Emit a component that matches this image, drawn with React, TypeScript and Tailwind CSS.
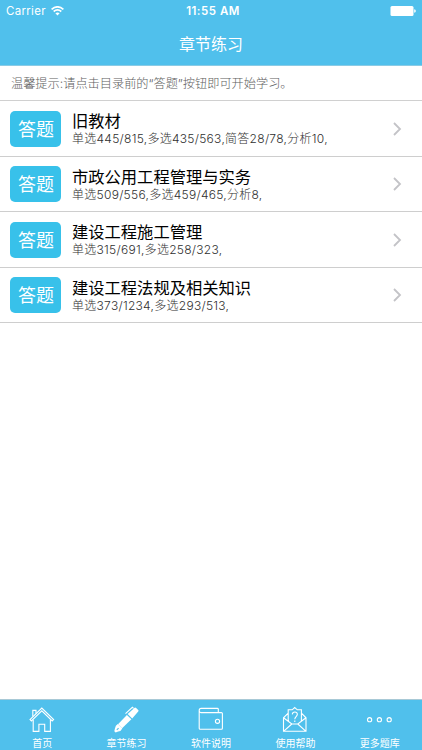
import type { ReactNode } from "react";

const chapters = [
  { title: "旧教材", detail: "单选445/815,多选435/563,简答28/78,分析10," },
  { title: "市政公用工程管理与实务", detail: "单选509/556,多选459/465,分析8," },
  { title: "建设工程施工管理", detail: "单选315/691,多选258/323," },
  { title: "建设工程法规及相关知识", detail: "单选373/1234,多选293/513," },
];

function TabIcon({ children }: { children: ReactNode }) {
  return (
    <svg width="28" height="28" viewBox="0 0 28 28" fill="none" stroke="white" strokeWidth="1.1" className="block">
      {children}
    </svg>
  );
}

const tabs = [
  {
    label: "首页",
    icon: (
      <TabIcon>
        <path d="M2 14.6 13.8 3 25.6 14.6 24.2 16 13.8 5.8 3.4 16Z" />
        <path d="M4.8 11.6V5.4H8v3M5.2 14.7V26.4H10.9V19.2H16.7V26.4H22.4V14.7" />
      </TabIcon>
    ),
  },
  {
    label: "章节练习",
    icon: (
      <TabIcon>
        <path d="M21.3 2.9Q22.2 2.1 23.1 2.9L25.2 4.9Q26 5.7 25.2 6.6L19.2 13.4 14.7 9.1Z" fill="white" stroke="none" />
        <path d="M13.9 9.9 18.4 14.2 9.1 23.3 5 19.3Z" fill="white" stroke="none" />
        <path d="M4.8 19 9.3 23.4Q8 26.2 5.2 26.6L2.6 27.4 1.3 26.2 2 23.3Q2.4 20.6 4.8 19Z" fill="white" stroke="none" />
        <path d="M12.5 8.6 19.4 2.3 20.6 3.4" strokeWidth="1.1" />
        <path d="m3.8 24.9 1.8-1.8" stroke="#50c0ec" strokeWidth="1.1" />
      </TabIcon>
    ),
  },
  {
    label: "软件说明",
    icon: (
      <TabIcon>
        <path d="M2.2 5.4V23.2Q2.2 24.2 3.2 24.2H24.4Q25.4 24.2 25.4 23.2V8.6Q25.4 7.6 24.4 7.6H4Q2.2 7.4 2.2 5.4 2.2 3.4 4.2 3.4H20.4Q21.3 3.4 21.3 4.3V7.6" />
        <circle cx="20.5" cy="16.3" r="2.1" />
      </TabIcon>
    ),
  },
  {
    label: "使用帮助",
    icon: (
      <TabIcon>
        <path d="M7.2 16.4V4.8H11.2L13.7 2.6 16.3 4.8H20.4V16.4M7.2 8.1 2.5 12.8V26.3H25V12.8L20.4 8.1M2.5 12.8 10.8 19H16.8L25 12.8M2.5 26.3 10.8 19M25 26.3 16.8 19" />
        <path d="M11.3 9.4C11.5 6.1 16.6 6.3 16.3 9.6 16 11.6 13.8 11.7 13.8 14.2M13.8 15.6v1.3" />
      </TabIcon>
    ),
  },
  {
    label: "更多题库",
    icon: (
      <TabIcon>
        <circle cx="3.6" cy="14.7" r="2.1" />
        <circle cx="13.4" cy="14.7" r="2.1" />
        <circle cx="23.2" cy="14.7" r="2.1" />
      </TabIcon>
    ),
  },
];

export default function App() {
  return (
    <div className="flex h-[750px] w-[422px] flex-col overflow-hidden bg-white font-['Inter','Noto_Sans_CJK_SC',sans-serif]">
      <header className="h-[66px] shrink-0 border-b border-[#8acbe5] bg-[#50c0ec] text-white">
        <div className="grid h-[22px] grid-cols-3 items-center px-[6px]">
          <div className="flex items-center gap-[5px]">
            <span className="text-[11.5px] leading-[22px] tracking-[0.3px]">Carrier</span>
            <svg width="13" height="10" viewBox="0 0 13 10" fill="none" stroke="white" strokeWidth="1.7">
              <path d="M.6 3.3Q6.5-1.6 12.4 3.3M2.7 5.5Q6.5 2.4 10.3 5.5" />
              <path d="M4.4 7.3Q6.5 5.6 8.6 7.3L6.5 9.5Z" fill="white" stroke="none" />
            </svg>
          </div>
          <span className="pl-[4px] text-center text-[11.5px] leading-[22px] font-semibold tracking-[0.5px]">11:55 AM</span>
          <svg width="26" height="10" viewBox="0 0 26 10" fill="white" className="justify-self-end">
            <rect x=".5" width="23" height="10" rx="1.5" />
            <path d="M24.2 3.2Q25.8 3.4 25.8 5T24.2 6.8Z" />
          </svg>
        </div>
        <h1 className="text-center text-[16px] leading-[44px] font-normal">章节练习</h1>
      </header>

      <p className="h-[34px] shrink-0 pl-[11px] text-[12.2px] leading-[35px] font-light whitespace-nowrap text-[#606060]">
        温馨提示:请点击目录前的“答题”按钮即可开始学习。
      </p>

      <main className="flex-1 border-t border-[#d0d0d0]">
        {chapters.map(({ title, detail }) => (
          <div key={title} className="flex h-[55.5px] items-center border-b border-[#cecece] pt-[1px] pr-[20px] pl-[10.4px]">
            <button className="h-9 w-[51px] shrink-0 rounded-[5px] bg-[#38c1ea] text-[18px] leading-[37px] font-normal text-white">答题</button>
            <div className="ml-[10.6px] flex-1 whitespace-nowrap">
              <h2 className="text-[16.3px] leading-[20px] font-normal text-black">{title}</h2>
              <p className="text-[12px] leading-[15px] font-light tracking-[0.28px] text-[#303030]">{detail}</p>
            </div>
            <svg width="9" height="14" viewBox="0 0 9 14" fill="none" stroke="#c3c3c7" strokeWidth="1.8">
              <path d="m1 1 6 6-6 6" />
            </svg>
          </div>
        ))}
      </main>

      <nav className="grid h-[51px] shrink-0 grid-cols-5 border-t border-[#a8c9d6] bg-[#50c0ec] text-white">
        {tabs.map(({ label, icon }) => (
          <a key={label} className="flex flex-col items-center pt-[5px]">
            {icon}
            <span className="mt-[2px] text-[10px] leading-[16px]">{label}</span>
          </a>
        ))}
      </nav>
    </div>
  );
}
